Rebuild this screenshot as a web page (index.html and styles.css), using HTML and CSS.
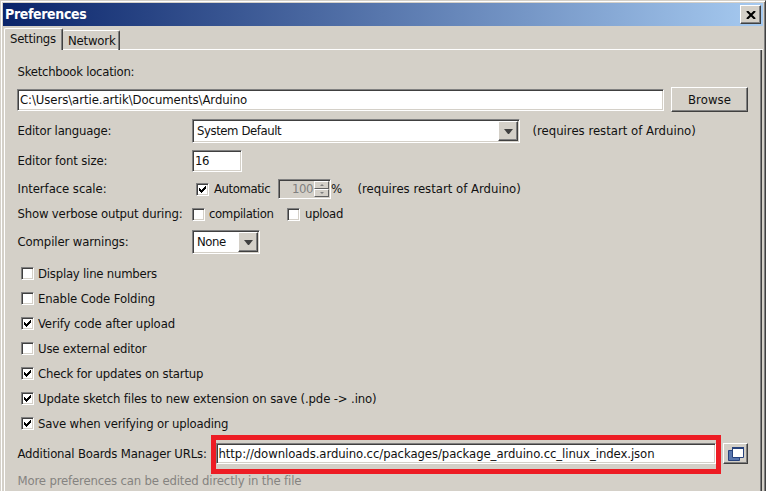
FILE: index.html
```html
<!DOCTYPE html>
<html lang="en">
<head>
<meta charset="utf-8">
<title>Preferences</title>
<link rel="stylesheet" href="styles.css">
</head>
<body>
<svg width="0" height="0" class="defs" aria-hidden="true">
  <symbol id="check" viewBox="0 0 7 7"><path d="M0 2h1v1h1v1h1v-1h1v-1h1v-1h1v-1h1v3h-1v1h-1v1h-1v1h-1v1h-1v-1h-1v-1h-1z" fill="#000"/></symbol>
  <symbol id="down" viewBox="0 0 9 5"><path d="M0 0h9L5 5H4z" fill="#404040"/></symbol>
</svg>
<div class="window">
  <header class="titlebar">
    <h1 class="title">Preferences</h1>
    <button class="close raised" aria-label="Close"><svg width="10" height="8" viewBox="0 0 10 8"><path d="M1 0l8 8M9 0L1 8" stroke="#000" stroke-width="2.1"/></svg></button>
  </header>
  <nav class="tabs">
    <div class="tab active ls-settings">Settings</div>
    <div class="tab ls-18">Network</div>
    <div class="tab-line"></div>
  </nav>
  <main class="panel">
    <div class="row row-location ls-26">Sketchbook location:</div>
    <div class="row row-path">
      <div class="field path ls-07">C:\Users\artie.artik\Documents\Arduino</div>
      <button class="browse raised ls-browse">Browse</button>
    </div>
    <div class="row row-language">
      <span class="label ls-18">Editor language:</span>
      <div class="field combo language"><span class="ls-42">System Default</span><i class="arrow raised"><svg width="9" height="5"><use href="#down"/></svg></i></div>
      <span class="note">(requires restart of Arduino)</span>
    </div>
    <div class="row row-size">
      <span class="label ls-12">Editor font size:</span>
      <div class="field size ls-42">16</div>
    </div>
    <div class="row row-scale">
      <span class="label ls-07">Interface scale:</span>
      <span class="box auto"><svg width="7" height="7"><use href="#check"/></svg></span>
      <span class="auto-label ls-42">Automatic</span>
      <div class="field spinner"><span class="ls-42">100</span><i class="steps"><b class="step"><svg width="4" height="2"><path d="M0 2L2 0l2 2z" fill="#808080"/></svg></b><b class="step"><svg width="4" height="2"><path d="M0 0l2 2 2-2z" fill="#808080"/></svg></b></i></div>
      <span class="percent">%</span>
      <span>(requires restart of Arduino)</span>
    </div>
    <div class="row row-verbose">
      <span class="label ls-18">Show verbose output during:</span>
      <span class="box"></span><span class="compilation ls-36">compilation</span>
      <span class="box"></span><span class="upload ls-28">upload</span>
    </div>
    <div class="row row-warnings">
      <span class="label ls-12">Compiler warnings:</span>
      <div class="field combo warnings"><span class="ls-42">None</span><i class="arrow raised"><svg width="9" height="5"><use href="#down"/></svg></i></div>
    </div>
    <div class="options">
      <div class="option"><span class="box"></span><span class="ls-22">Display line numbers</span></div>
      <div class="option"><span class="box"></span><span class="ls-12">Enable Code Folding</span></div>
      <div class="option"><span class="box"><svg width="7" height="7"><use href="#check"/></svg></span><span class="ls-12">Verify code after upload</span></div>
      <div class="option"><span class="box"></span><span class="ls-18">Use external editor</span></div>
      <div class="option"><span class="box"><svg width="7" height="7"><use href="#check"/></svg></span><span class="ls-20">Check for updates on startup</span></div>
      <div class="option"><span class="box"><svg width="7" height="7"><use href="#check"/></svg></span><span class="ls-14">Update sketch files to new extension on save (.pde -&gt; .ino)</span></div>
      <div class="option"><span class="box"><svg width="7" height="7"><use href="#check"/></svg></span><span class="ls-18">Save when verifying or uploading</span></div>
    </div>
    <div class="row row-urls">
      <span class="urls-label ls-18">Additional Boards Manager URLs:</span>
      <div class="field urls ls-08">http://downloads.arduino.cc/packages/package_arduino.cc_linux_index.json<span class="highlight"></span></div>
      <button class="open raised" aria-label="Edit URLs"><svg width="16" height="14" viewBox="0 0 16 14"><path d="M.5 3.500H11.500V13.500H.5z" fill="#5876ae" stroke="#27427c"/><path d="M4.500 1H15.500V10.500H4.500z" fill="#fff" stroke="#27427c"/><path d="M4 1H16" stroke="#27427c" stroke-width="2"/></svg></button>
    </div>
    <div class="row row-more ls-16">More preferences can be edited directly in the file</div>
  </main>
</div>
</body>
</html>
```
FILE: styles.css
```css
* { box-sizing: border-box; }

body {
  margin: 0;
  background: #fff;
  color: #111;
  font: 13px/20px "DejaVu Sans Condensed", "DejaVu Sans", sans-serif;
  font-stretch: condensed;
  overflow: hidden;
}

button { font: inherit; color: inherit; margin: 0; padding: 0; }
.defs { position: absolute; }
svg { display: block; }

.window {
  width: 766px;
  height: 491px;
  display: flex;
  flex-direction: column;
  background: #d4d0c8;
  border-top: 1px solid #d4d0c8;
  border-left: 1px solid #d4d0c8;
  border-right: 1px solid #404040;
  box-shadow: inset 1px 1px #fff, inset -1px 0 #808080;
  padding: 2px 2px 0;
}

.raised {
  display: flex;
  align-items: center;
  justify-content: center;
  background: #d4d0c8;
  border: 1px solid;
  border-color: #fff #404040 #404040 #fff;
  box-shadow: inset -1px -1px #808080;
}

.titlebar {
  display: flex;
  align-items: center;
  justify-content: space-between;
  height: 23px;
  padding: 0 2px;
  background: linear-gradient(90deg, #0a246a, #a6caf0);
}
.title { margin: 0; font-size: 14px; line-height: 23px; color: #fff; letter-spacing: -.35px; }
.close { width: 21px; height: 19px; }

.tabs { display: flex; align-items: flex-end; height: 24px; padding-left: 1px; }
.tab {
  height: 20px;
  width: 57px;
  padding-left: 5px;
  line-height: 19px;
  border: solid;
  border-width: 1px 1px 0 0;
  border-color: #fff #404040;
  border-radius: 2px 2px 0 0;
  box-shadow: inset -1px 0 #808080, inset 0 -1px #fff;
}
.tab.active {
  height: 22px;
  width: 59px;
  padding-left: 5px;
  border-left: 1px solid #fff;
  box-shadow: inset -1px 0 #808080;
}
.tab-line { flex: 1; height: 1px; background: #fff; }

.panel {
  flex: 1;
  margin: 0 1px;
  padding: 12px 13px 0 12px;
  border-left: 1px solid #fff;
  border-right: 1px solid #404040;
  box-shadow: inset -1px 0 #808080;
}

.row, .option { display: flex; align-items: center; white-space: nowrap; }
.label { width: 175px; flex: none; padding-left: .5px; }
.field {
  display: flex;
  align-items: center;
  background: #fff;
  border: 1px solid;
  border-color: #808080 #fff #fff #808080;
  box-shadow: inset 1px 1px #404040, inset -1px -1px #d4d0c8;
}

.row-location { height: 20px; padding-left: .5px; }
.row-path { height: 25px; margin-top: 5px; justify-content: space-between; }
.path { width: 647px; height: 22px; padding-left: 2px; }
.browse { width: 77px; height: 25px; }
.row-language { height: 24px; margin-top: 7px; }
.row-size { height: 22px; margin-top: 7px; }
.row-scale { height: 20px; margin-top: 7px; }
.row-verbose { height: 20px; margin-top: 5px; }
.row-warnings { height: 24px; margin-top: 6px; }

.combo { height: 24px; padding-left: 4px; justify-content: space-between; }
.language { width: 328px; margin-right: 12.5px; }
.arrow { width: 20px; height: 20px; margin: 0 1px 0 0; }
.warnings { width: 68px; }
.size { width: 50px; height: 22px; padding-left: 2px; }

.box {
  flex: none;
  display: flex;
  align-items: center;
  justify-content: center;
  width: 13px;
  height: 13px;
  background: #fff;
  border: 1px solid;
  border-color: #808080 #fff #fff #808080;
  box-shadow: inset 1px 1px #404040, inset -1px -1px #d4d0c8;
}
.auto { margin-left: 4px; }
.auto-label { width: 65px; margin-left: 4px; padding-left: 1px; }
.spinner { width: 53px; height: 20px; justify-content: flex-end; background: #d4d0c8; color: #808080; }
.steps { width: 15px; height: 16px; margin: 0 1px 0 1px; display: flex; flex-direction: column; }
.step {
  flex: 1;
  display: flex;
  align-items: center;
  justify-content: center;
  border: 1px solid;
  border-color: #fff #606060 #606060 #fff;
}
.percent { width: 26.5px; }
.compilation { width: 82px; padding-left: 4px; }
.upload { padding-left: 5px; }

.options { margin: 7px 0 0 4px; }
.option { height: 25px; gap: 4px; }

.row-urls { height: 21px; margin-top: 7px; justify-content: space-between; }
.urls-label { width: 199px; padding-left: .5px; }
.urls { position: relative; width: 500px; height: 21px; padding-left: 1.5px; margin-right: 7px; }
.highlight {
  position: absolute;
  left: -6px;
  top: -9px;
  width: 510px;
  height: 39px;
  border: 5px solid #ed1c24;
}
.open { width: 25px; height: 21px; }
.row-more { height: 20px; margin-top: 7px; padding-left: .5px; color: #858380; }

.ls-settings { letter-spacing: -.27px; }
.ls-browse { letter-spacing: .1px; }
.ls-07 { letter-spacing: -.07px; }
.ls-08 { letter-spacing: -.08px; }
.ls-12 { letter-spacing: -.12px; }
.ls-14 { letter-spacing: -.14px; }
.ls-16 { letter-spacing: -.16px; }
.ls-18 { letter-spacing: -.18px; }
.ls-20 { letter-spacing: -.2px; }
.ls-22 { letter-spacing: -.22px; }
.ls-26 { letter-spacing: -.26px; }
.ls-28 { letter-spacing: -.28px; }
.ls-36 { letter-spacing: -.36px; }
.ls-42 { letter-spacing: -.42px; }
```
